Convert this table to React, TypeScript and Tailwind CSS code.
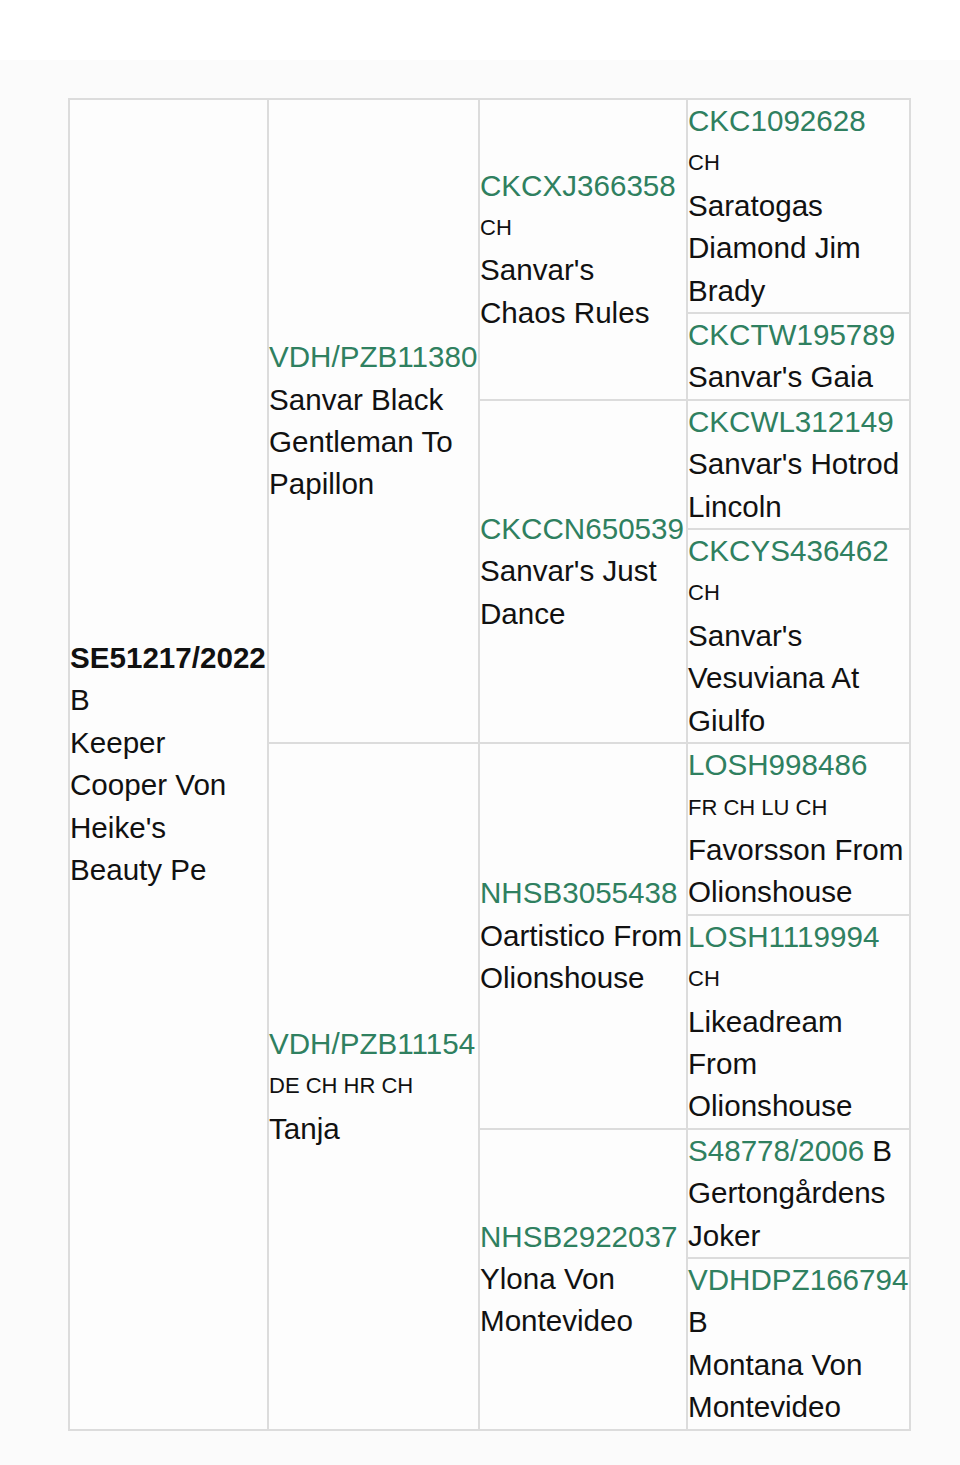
import React from "react";

type Dog = {
  id: string;
  sex?: string;
  titles?: string;
  name: string;
  bold?: boolean;
};

function DogInfo({ dog }: { dog: Dog }) {
  return (
    <>
      <div>
        {dog.bold ? (
          <span className="font-bold text-[#111]">{dog.id}</span>
        ) : (
          <span className="text-[#2f8060]">{dog.id}</span>
        )}
        {dog.sex && <> {dog.sex}</>}
      </div>
      {dog.titles && <div className="text-[22px]">{dog.titles}</div>}
      <div>{dog.name}</div>
    </>
  );
}

const cellBase =
  "bg-[#fdfdfd] flex flex-col justify-center text-[29.6px] leading-[42.4px] text-[#111]";

export default function App() {
  return (
    <div className="min-h-[1465px] bg-white font-['Liberation_Sans',Arial,sans-serif]">
      <div className="h-[60px] bg-white" />
      <div className="bg-[#fbfbfb] pt-[38px] pl-[68px] pb-[35px]">
        {/* PEDIGREE TABLE */}
        <div className="grid w-fit grid-cols-[197px_209px_206px_221px] gap-[2px] border-2 border-[#dcdcdc] bg-[#dcdcdc]">
          <div className={`${cellBase} col-start-1 row-start-1 row-span-8 pr-[3px]`}>
            <DogInfo
              dog={{
                id: "SE51217/2022",
                sex: "B",
                name: "Keeper Cooper Von Heike's Beauty Pe",
                bold: true,
              }}
            />
          </div>

          <div className={`${cellBase} col-start-2 row-start-1 row-span-4`}>
            <DogInfo dog={{ id: "VDH/PZB11380", name: "Sanvar Black Gentleman To Papillon" }} />
          </div>
          <div className={`${cellBase} col-start-2 row-start-5 row-span-4`}>
            <DogInfo dog={{ id: "VDH/PZB11154", titles: "DE CH HR CH", name: "Tanja" }} />
          </div>

          <div className={`${cellBase} col-start-3 row-start-1 row-span-2`}>
            <DogInfo dog={{ id: "CKCXJ366358", titles: "CH", name: "Sanvar's Chaos Rules" }} />
          </div>
          <div className={`${cellBase} col-start-3 row-start-3 row-span-2`}>
            <DogInfo dog={{ id: "CKCCN650539", name: "Sanvar's Just Dance" }} />
          </div>
          <div className={`${cellBase} col-start-3 row-start-5 row-span-2`}>
            <DogInfo dog={{ id: "NHSB3055438", name: "Oartistico From Olionshouse" }} />
          </div>
          <div className={`${cellBase} col-start-3 row-start-7 row-span-2`}>
            <DogInfo dog={{ id: "NHSB2922037", name: "Ylona Von Montevideo" }} />
          </div>

          <div className={`${cellBase} col-start-4 row-start-1`}>
            <DogInfo dog={{ id: "CKC1092628", titles: "CH", name: "Saratogas Diamond Jim Brady" }} />
          </div>
          <div className={`${cellBase} col-start-4 row-start-2`}>
            <DogInfo dog={{ id: "CKCTW195789", name: "Sanvar's Gaia" }} />
          </div>
          <div className={`${cellBase} col-start-4 row-start-3`}>
            <DogInfo dog={{ id: "CKCWL312149", name: "Sanvar's Hotrod Lincoln" }} />
          </div>
          <div className={`${cellBase} col-start-4 row-start-4`}>
            <DogInfo dog={{ id: "CKCYS436462", titles: "CH", name: "Sanvar's Vesuviana At Giulfo" }} />
          </div>
          <div className={`${cellBase} col-start-4 row-start-5`}>
            <DogInfo dog={{ id: "LOSH998486", titles: "FR CH LU CH", name: "Favorsson From Olionshouse" }} />
          </div>
          <div className={`${cellBase} col-start-4 row-start-6`}>
            <DogInfo dog={{ id: "LOSH1119994", titles: "CH", name: "Likeadream From Olionshouse" }} />
          </div>
          <div className={`${cellBase} col-start-4 row-start-7`}>
            <DogInfo dog={{ id: "S48778/2006", sex: "B", name: "Gertongårdens Joker" }} />
          </div>
          <div className={`${cellBase} col-start-4 row-start-8`}>
            <DogInfo dog={{ id: "VDHDPZ166794", sex: "B", name: "Montana Von Montevideo" }} />
          </div>
        </div>
      </div>
    </div>
  );
}
